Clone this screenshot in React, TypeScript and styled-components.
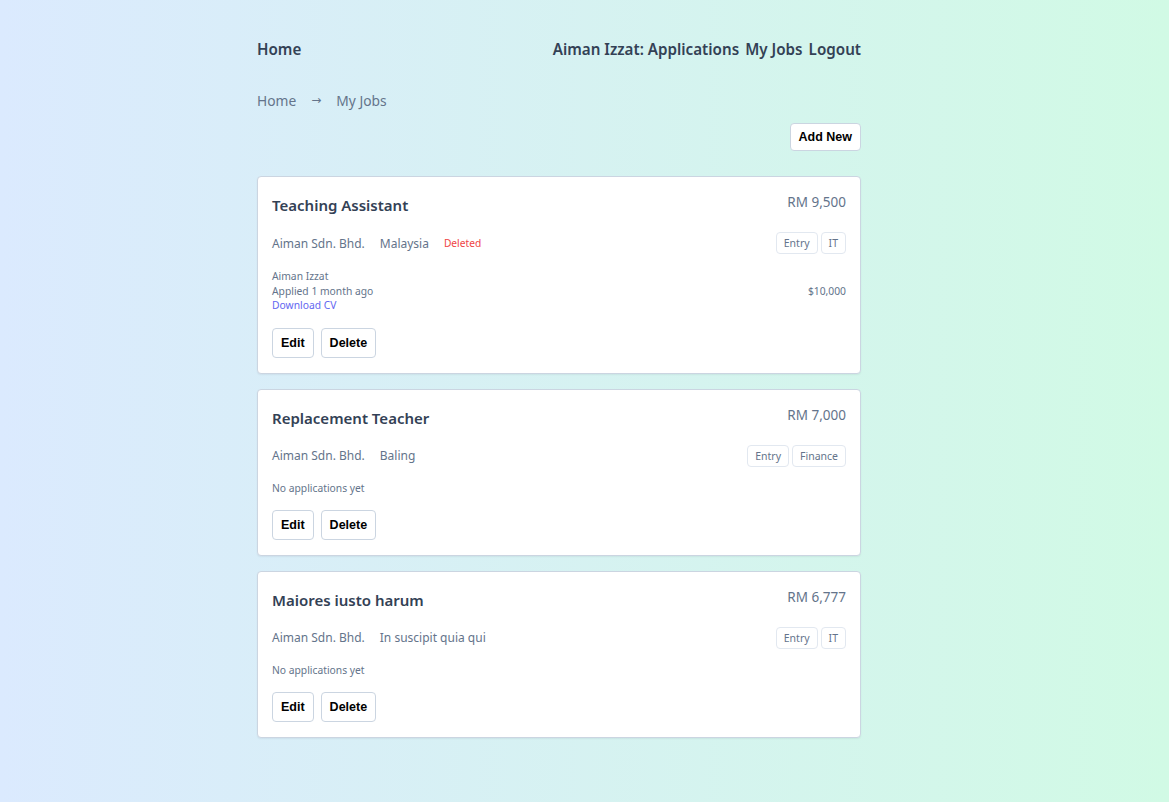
import React from "react";
import styled, { createGlobalStyle } from "styled-components";

const GlobalStyle = createGlobalStyle`
  * { box-sizing: border-box; }
  html, body { margin: 0; padding: 0; }
  body {
    min-height: 802px;
    background: linear-gradient(to right, #dbeafe, #d1fae5);
    font-family: "Noto Sans", "Open Sans", sans-serif;
    color: #334155;
  }
`;

const Page = styled.div`
  width: 604px;
  margin-left: 257px;
  padding-top: 37px;
  padding-bottom: 60px;
`;

const Nav = styled.nav`
  display: flex;
  justify-content: space-between;
  align-items: center;
  height: 24px;
`;

const NavGroup = styled.div`
  display: flex;
  gap: 6px;
`;

const NavLink = styled.a`
  font-size: 15.2px;
  font-weight: 600;
  color: #334155;
  text-decoration: none;
  line-height: 24px;
`;

const Breadcrumb = styled.div`
  margin-top: 30px;
  display: flex;
  align-items: center;
  gap: 15px;
  font-size: 13.8px;
  line-height: 20px;
  color: #64748b;
`;

const Arrow = styled.span`
  font-family: "DejaVu Sans", sans-serif;
  font-size: 12px;
  position: relative;
  top: -1px;
`;

const Toolbar = styled.div`
  margin-top: 12px;
  display: flex;
  justify-content: flex-end;
`;

const Button = styled.button<{ $h?: number }>`
  font-family: "Liberation Sans", Arial, sans-serif;
  font-weight: 700;
  font-size: 12.5px;
  color: #000;
  background: #fff;
  border: 1px solid #cbd5e1;
  border-radius: 4px;
  padding: 0 8px;
  height: ${(p) => p.$h ?? 30}px;
  cursor: pointer;
`;

const List = styled.div`
  margin-top: 25px;
  display: flex;
  flex-direction: column;
  gap: 15px;
`;

const Card = styled.div`
  background: #fff;
  border: 1px solid #cbd5e1;
  border-radius: 4px;
  box-shadow: 0 1px 2px rgba(15, 23, 42, 0.06);
  padding: 15px 14px;
  display: flex;
  flex-direction: column;
  gap: 15px;
`;

const Header = styled.div`
  display: flex;
  justify-content: space-between;
  align-items: flex-start;
`;

const Title = styled.h2`
  margin: 0;
  padding-top: 1px;
  font-size: 15px;
  font-weight: 600;
  line-height: 24px;
  color: #334155;
`;

const Price = styled.div`
  font-size: 13.5px;
  line-height: 20px;
  color: #64748b;
`;

const MetaRow = styled.div`
  display: flex;
  justify-content: space-between;
  align-items: center;
`;

const Meta = styled.div`
  display: flex;
  align-items: center;
  gap: 15px;
  font-size: 12px;
  color: #64748b;
`;

const Deleted = styled.span`
  font-size: 10.2px;
  color: #ef4444;
`;

const Tags = styled.div`
  display: flex;
  gap: 3px;
`;

const Tag = styled.span`
  height: 22px;
  padding: 0 7px;
  display: flex;
  align-items: center;
  border: 1px solid #e2e8f0;
  border-radius: 4px;
  font-size: 10.5px;
  color: #64748b;
`;

const Applicant = styled.div`
  display: flex;
  justify-content: space-between;
  align-items: center;
  font-size: 10.3px;
  line-height: 14.5px;
  color: #64748b;
`;

const AppInfo = styled.div`
  display: flex;
  flex-direction: column;
`;

const Download = styled.a`
  color: #6366f1;
  text-decoration: none;
`;

const Empty = styled.div`
  font-size: 10.3px;
  line-height: 13px;
  color: #64748b;
`;

const Actions = styled.div`
  display: flex;
  gap: 7px;
`;

type Job = {
  title: string;
  price: string;
  location: string;
  deleted?: boolean;
  tags: string[];
  applicant?: { name: string; applied: string; salary: string };
};

const jobs: Job[] = [
  {
    title: "Teaching Assistant",
    price: "RM 9,500",
    location: "Malaysia",
    deleted: true,
    tags: ["Entry", "IT"],
    applicant: { name: "Aiman Izzat", applied: "Applied 1 month ago", salary: "$10,000" },
  },
  { title: "Replacement Teacher", price: "RM 7,000", location: "Baling", tags: ["Entry", "Finance"] },
  { title: "Maiores iusto harum", price: "RM 6,777", location: "In suscipit quia qui", tags: ["Entry", "IT"] },
];

export default function App() {
  return (
    <>
      <GlobalStyle />
      <Page>
        <Nav>
          <NavLink href="#">Home</NavLink>
          <NavGroup>
            <NavLink href="#">Aiman Izzat: Applications</NavLink>
            <NavLink href="#">My Jobs</NavLink>
            <NavLink href="#">Logout</NavLink>
          </NavGroup>
        </Nav>
        <Breadcrumb>
          <span>Home</span>
          <Arrow>→</Arrow>
          <span>My Jobs</span>
        </Breadcrumb>
        <Toolbar>
          <Button $h={28}>Add New</Button>
        </Toolbar>
        <List>
          {jobs.map((job) => (
            <Card key={job.title}>
              <Header>
                <Title>{job.title}</Title>
                <Price>{job.price}</Price>
              </Header>
              <MetaRow>
                <Meta>
                  <span>Aiman Sdn. Bhd.</span>
                  <span>{job.location}</span>
                  {job.deleted && <Deleted>Deleted</Deleted>}
                </Meta>
                <Tags>
                  {job.tags.map((t) => (
                    <Tag key={t}>{t}</Tag>
                  ))}
                </Tags>
              </MetaRow>
              {job.applicant ? (
                <Applicant>
                  <AppInfo>
                    <span>{job.applicant.name}</span>
                    <span>{job.applicant.applied}</span>
                    <Download href="#">Download CV</Download>
                  </AppInfo>
                  <span>{job.applicant.salary}</span>
                </Applicant>
              ) : (
                <Empty>No applications yet</Empty>
              )}
              <Actions>
                <Button>Edit</Button>
                <Button>Delete</Button>
              </Actions>
            </Card>
          ))}
        </List>
      </Page>
    </>
  );
}
